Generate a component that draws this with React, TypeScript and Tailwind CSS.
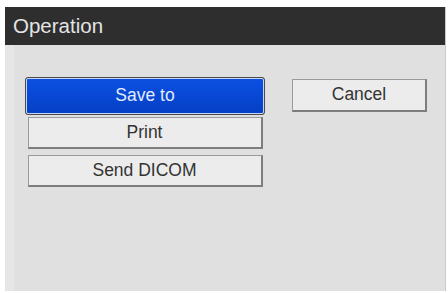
import React from 'react'

const font = { fontFamily: '"Liberation Sans", Arial, sans-serif' }

function GrayButton({ label, className }: { label: string; className: string }) {
  return (
    <button
      className={`flex items-center justify-center bg-[#ececec] text-[#333] text-[17.5px] leading-none border-t border-l border-[#9a9a9a] border-r-2 border-b-2 border-r-[#7d7d7d] border-b-[#7d7d7d] ${className}`}
    >
      {label}
    </button>
  )
}

export default function App() {
  return (
    <div className="w-[448px] h-[293px] bg-white pt-[7px] pl-[5px]" style={font}>
      <div className="w-[441px] h-[284px] flex flex-col bg-[#e0e0e0] border-r border-[#c9c9c9]">
        <div className="h-[38px] bg-[#2e2e2e] flex items-center pl-[8px]">
          <span className="text-[20.5px] text-[#e4e4e4] leading-none">Operation</span>
        </div>
        <div className="flex-1 flex">
          <div className="w-[9px] bg-[#e6e6e6]" />
          <div className="flex items-start pl-[11px] pt-[32px]">
            <div className="w-[240px] flex flex-col items-center">
              <div className="w-[240px] h-[38px] rounded-[3px] border border-[#4a4a4a] p-0 bg-[#4a4a4a]">
                <div className="w-full h-full rounded-[2px] border border-[#c7d6f2] bg-gradient-to-b from-[#0c50e2] to-[#0540c6] flex items-center justify-center">
                  <span className="text-[17.5px] text-[#e2ecff] leading-none">Save to</span>
                </div>
              </div>
              <GrayButton label="Print" className="mt-[2px] w-[235px] h-[32px]" />
              <GrayButton label="Send DICOM" className="mt-[6px] w-[235px] h-[32px]" />
            </div>
            <GrayButton label="Cancel" className="ml-[27px] mt-[2px] w-[135px] h-[33px]" />
          </div>
        </div>
      </div>
    </div>
  )
}
